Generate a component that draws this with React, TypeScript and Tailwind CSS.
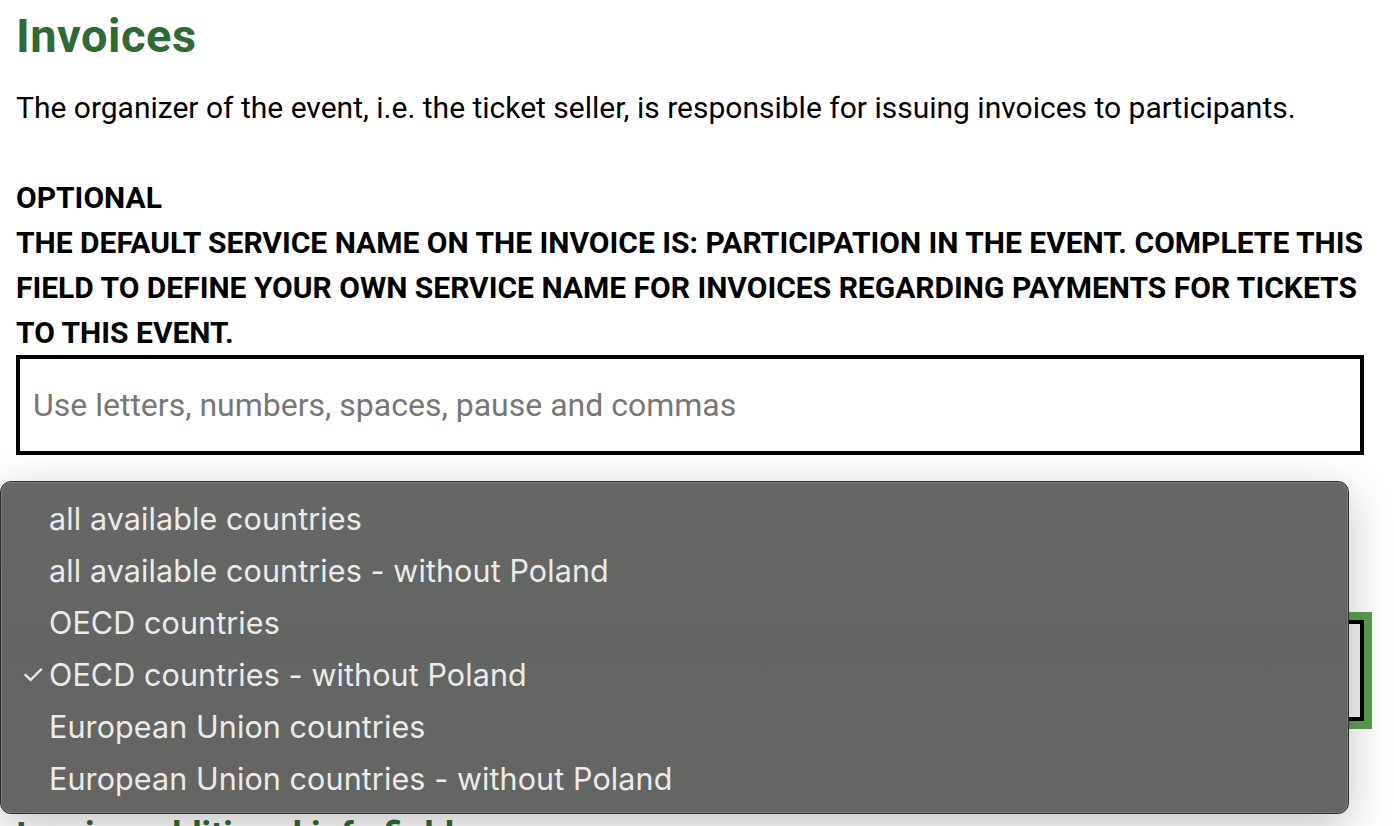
import React from "react";

const options = [
  "all available countries",
  "all available countries - without Poland",
  "OECD countries",
  "OECD countries - without Poland",
  "European Union countries",
  "European Union countries - without Poland",
];

export default function App() {
  return (
    <div className="relative w-[1394px] h-[826px] overflow-hidden bg-white" style={{ fontFamily: "Roboto, 'Liberation Sans', sans-serif" }}>
      <div className="pl-4 pr-[30px] pt-[8px]">
        <h1 className="text-[47px] leading-[56px] font-bold text-[#2e6a36] tracking-[0.5px]">Invoices</h1>
        <p className="mt-[26px] text-[30px] leading-[36px] text-black whitespace-nowrap">
          The organizer of the event, i.e. the ticket seller, is responsible for issuing invoices to participants.
        </p>
        <div className="mt-[49px] text-[30px] leading-[45px] font-bold text-black uppercase whitespace-nowrap">
          <div>OPTIONAL</div>
          <div>THE DEFAULT SERVICE NAME ON THE INVOICE IS: PARTICIPATION IN THE EVENT. COMPLETE THIS</div>
          <div>FIELD TO DEFINE YOUR OWN SERVICE NAME FOR INVOICES REGARDING PAYMENTS FOR TICKETS</div>
          <div>TO THIS EVENT.</div>
        </div>
        <div className="h-[100px] border-4 border-black flex items-center px-[13px]">
          <span className="text-[32px] text-[#777777]">Use letters, numbers, spaces, pause and commas</span>
        </div>
        <div className="mt-[110px] text-[30px] leading-[45px] font-bold text-black uppercase">INVOICES FOR COUNTRIES</div>
        <div className="mt-[10px] h-[101px] border-4 border-black outline-8 outline-[#58a14e] bg-[#f4f4f4] flex items-center px-[13px]">
          <span className="text-[32px] text-black">OECD countries - without Poland</span>
        </div>
        <h2 className="mt-[93px] text-[36px] leading-[44px] font-bold text-[#2e6a36]">Invoice additional info field</h2>
      </div>

      {/* native select popup overlay */}
      <div
        className="absolute left-0 top-[481px] w-[1349px] h-[333px] rounded-[11px] border border-[#2f2f2f] bg-[#636562] shadow-[0_12px_45px_rgba(0,0,0,0.24)] pt-[11px]"
        style={{ fontFamily: "Inter, 'Noto Sans', sans-serif", backgroundImage: "linear-gradient(180deg, #676866 0%, #626561 45%, #656664 100%)" }}
      >
        <div className="absolute inset-0 rounded-[10px] border border-[#7a7b79] pointer-events-none" />
        {options.map((o, i) => (
          <div key={o} className="relative h-[52px] flex items-center pl-[48px] text-[30.5px] text-[#ebebea] tracking-[0.1px]">
            {i === 3 && <span className="absolute left-[20px] text-[27px]">✓</span>}
            {o}
          </div>
        ))}
      </div>
    </div>
  );
}
